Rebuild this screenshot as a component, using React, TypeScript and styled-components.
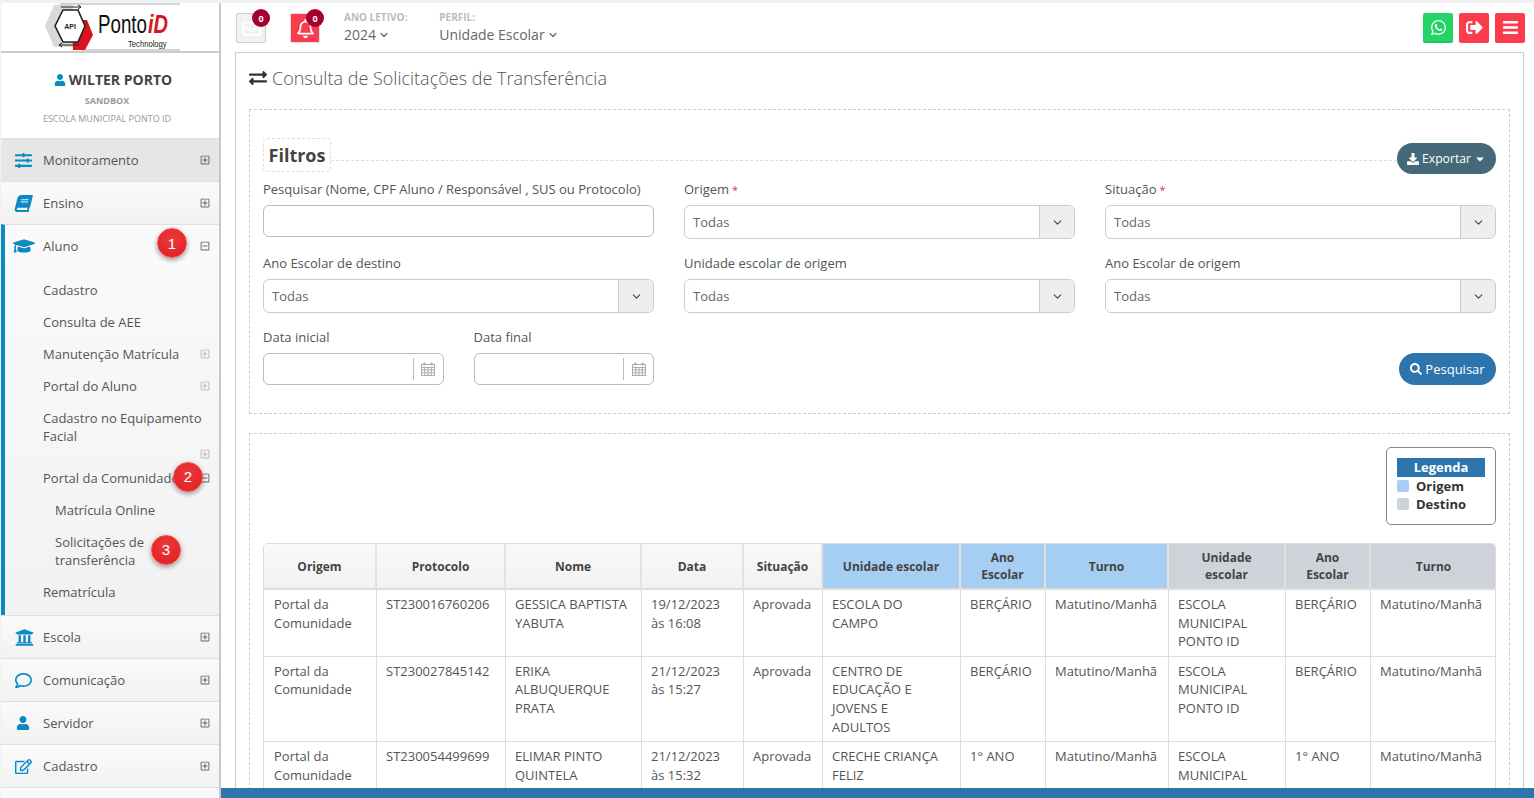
import React from 'react';
import styled, { createGlobalStyle } from 'styled-components';
import { ChevronDown } from 'lucide-react';
import {
  FaBars,
  FaBook,
  FaCaretDown,
  FaDownload,
  FaExchangeAlt,
  FaGraduationCap,
  FaRegBell,
  FaRegComment,
  FaRegEdit,
  FaRegEnvelope,
  FaRegMinusSquare,
  FaRegPlusSquare,
  FaSearch,
  FaSignOutAlt,
  FaSlidersH,
  FaUniversity,
  FaUser,
  FaWhatsapp,
} from 'react-icons/fa';

const GlobalStyle = createGlobalStyle`
  html, body {
    margin: 0;
    height: 100%;
    overflow: hidden;
    background: #f1f1f1;
    font-family: "Open Sans", "Liberation Sans", sans-serif;
    font-size: 13px;
    color: #555;
  }
  * { box-sizing: border-box; }
`;

const Shell = styled.div`
  display: grid;
  grid-template-columns: 220px 1fr;
  height: calc(100vh - 3px);
  margin: 3px 0 0 1px;
  background: #fff;
  overflow: hidden;
  border-top-left-radius: 4px;
`;

const Sidebar = styled.aside`
  display: flex;
  flex-direction: column;
  border-right: 2px solid #c8c8c8;
  overflow: hidden;
`;

const LogoBar = styled.div`
  height: 50px;
  flex: none;
  display: flex;
  padding-left: 44px;
  border-bottom: 2px solid #ccc;
`;

const UserCard = styled.div`
  height: 85px;
  flex: none;
  padding: 17px 6px 0 0;
  text-align: center;
`;

const UserName = styled.div`
  display: flex;
  justify-content: center;
  align-items: center;
  gap: 3px;
  padding-left: 12px;
  font-size: 14px;
  line-height: 20px;
  font-weight: 700;
  color: #444;
  svg { color: #0a8ac4; font-size: 12px; }
`;

const UserLine = styled.div<{ $bold?: boolean }>`
  font-size: 9px;
  font-weight: ${p => (p.$bold ? 700 : 400)};
  line-height: 17px;
  color: #999;
  margin-top: ${p => (p.$bold ? '2px' : '1px')};
`;

const MenuItem = styled.div<{ $hover?: boolean }>`
  position: relative;
  flex: none;
  height: 43px;
  display: flex;
  align-items: center;
  padding: 0 9px 0 42px;
  background: ${p => (p.$hover ? '#e6e6e6' : 'linear-gradient(#fafafa, #f2f2f2)')};
  border-top: 1px solid #dfdfdf;
  font-size: 13px;
  color: #555;
`;

const MenuIcon = styled.span<{ $size?: number; $left?: number; $skew?: boolean }>`
  position: absolute;
  left: ${p => p.$left ?? 4}px;
  width: 36px;
  display: flex;
  justify-content: center;
  color: #0a8ac4;
  font-size: ${p => p.$size ?? 17}px;
  transform: ${p => (p.$skew ? 'skewX(-14deg)' : 'none')};
`;

const MenuLabel = styled.span`
  flex: 1;
`;

const Toggle = styled.span<{ $muted?: boolean }>`
  display: flex;
  font-size: 10px;
  color: ${p => (p.$muted ? '#bbb' : '#666')};
`;

const OpenGroup = styled.div`
  flex: none;
  height: 391px;
  border-left: 4px solid #0a8ac4;
  background: linear-gradient(#fafafa, #f2f2f2);
  border-top: 1px solid #dfdfdf;
`;

const GroupHead = styled(MenuItem)`
  padding-left: 38px;
  background: none;
  border-top: 0;
  height: 42px;
`;

const SubList = styled.div`
  padding-top: 7px;
`;

const SubItem = styled.div<{ $nested?: boolean; $stack?: boolean }>`
  position: relative;
  display: flex;
  flex-wrap: ${p => (p.$stack ? 'wrap' : 'nowrap')};
  align-items: center;
  justify-content: flex-end;
  padding: 7px 9px ${p => (p.$stack ? '0' : '7px')} ${p => (p.$nested ? '50px' : '38px')};
  line-height: 18px;
  color: #555;
  font-size: 13px;
`;

const SubLabel = styled.span<{ $full?: boolean; $narrow?: boolean }>`
  flex: ${p => (p.$full ? '0 0 100%' : '1')};
  max-width: ${p => (p.$narrow ? '100px' : 'none')};
  margin-right: ${p => (p.$narrow ? 'auto' : '0')};
`;

const StackToggle = styled(Toggle)`
  margin-top: 4px;
  height: 13px;
`;

const Marker = styled.span<{ $right: number; $top: number }>`
  position: absolute;
  right: ${p => p.$right}px;
  top: ${p => p.$top}px;
  width: 30px;
  height: 30px;
  border-radius: 50%;
  background: radial-gradient(circle at 50% 35%, #ea3a3a, #e21c22);
  box-shadow: 0 2px 5px rgba(0, 0, 0, 0.4);
  border: 1px solid #f44;
  color: #fff;
  display: flex;
  align-items: center;
  justify-content: center;
  font-family: "Liberation Sans", sans-serif;
  font-size: 15px;
  z-index: 2;
`;

const Main = styled.main`
  display: flex;
  flex-direction: column;
  padding: 0 10px 0 14px;
  min-width: 0;
  overflow: hidden;
`;

const TopBar = styled.header`
  height: 49px;
  flex: none;
  display: flex;
  align-items: flex-start;
  padding: 10px 0 0 1px;
`;

const SquareButton = styled.span<{ $bg: string; $line: string }>`
  position: relative;
  width: 30px;
  height: 30px;
  display: flex;
  align-items: center;
  justify-content: center;
  background: ${p => p.$bg};
  border: 1px solid ${p => p.$line};
  border-radius: 2px;
  color: #fff;
  font-size: 19px;
`;

const CountBadge = styled.span`
  position: absolute;
  top: -5px;
  right: -5px;
  width: 18px;
  height: 18px;
  border-radius: 50%;
  background: #a50030;
  color: #fff;
  font-size: 9px;
  font-weight: 700;
  display: flex;
  align-items: center;
  justify-content: center;
`;

const Gap = styled.span<{ $w: number }>`
  width: ${p => p.$w}px;
  flex: none;
`;

const Picker = styled.div`
  display: flex;
  flex-direction: column;
`;

const PickerLabel = styled.span`
  font-size: 10px;
  font-weight: 700;
  line-height: 11px;
  color: #bbb;
  margin-top: -1px;
`;

const PickerValue = styled.span`
  display: flex;
  align-items: center;
  gap: 2px;
  font-size: 14px;
  line-height: 20px;
  margin-top: 2px;
  color: #666;
  svg { stroke-width: 2.4; }
`;

const RightButtons = styled.div`
  margin: 0 -1px 0 auto;
  display: flex;
  gap: 6px;
`;

const ActionSquare = styled.span<{ $bg: string; $shade: string }>`
  width: 30px;
  height: 30px;
  display: flex;
  align-items: center;
  justify-content: center;
  color: #fff;
  font-size: 17px;
  background: ${p => p.$bg};
  border-bottom: 2px solid ${p => p.$shade};
  border-radius: 2px;
`;

const Panel = styled.section`
  flex: 1;
  border: 1px solid #ccc;
  border-bottom: 0;
  padding: 0 13px;
  overflow: hidden;
`;

const PageTitle = styled.h1`
  margin: 0;
  height: 56px;
  padding-bottom: 6px;
  display: flex;
  align-items: center;
  gap: 5px;
  font-size: 18px;
  font-weight: 300;
  color: #555;
  svg { color: #333; font-size: 18px; }
`;

const DashedBox = styled.div`
  border: 1px dashed #ccc;
  padding: 28px 13px;
`;

const TableBox = styled(DashedBox)`
  margin-top: 19px;
  padding: 13px 13px 0;
`;

const FilterHead = styled.div`
  display: flex;
  align-items: flex-start;
  margin-bottom: 6px;
`;

const FilterTitle = styled.div`
  width: 68px;
  height: 34px;
  border: 1px dashed #ddd;
  border-radius: 4px;
  display: flex;
  align-items: center;
  justify-content: center;
  font-size: 18px;
  font-weight: 700;
  color: #444;
`;

const FilterLine = styled.span`
  flex: 1;
  margin-top: 22px;
  border-top: 1px dashed #ddd;
`;

const PillButton = styled.span<{ $bg: string; $w: number; $h: number }>`
  width: ${p => p.$w}px;
  height: ${p => p.$h}px;
  display: flex;
  align-items: center;
  justify-content: center;
  gap: 3px;
  background: ${p => p.$bg};
  color: #fff;
  border-radius: 16px;
  font-size: 13px;
  svg { font-size: 12px; }
`;

const ExportButton = styled(PillButton)`
  margin-top: 5px;
  font-size: 12.2px;
`;

const FieldGrid = styled.div`
  display: grid;
  grid-template-columns: repeat(3, 1fr);
  column-gap: 30px;
  row-gap: 15px;
`;

const DateGrid = styled.div`
  display: grid;
  grid-template-columns: 1fr 1fr;
  column-gap: 30px;
`;

const SearchCell = styled.div`
  grid-column: 3;
  display: flex;
  justify-content: flex-end;
  align-items: flex-end;
`;

const Field = styled.div`
  display: flex;
  flex-direction: column;
  gap: 7px;
`;

const FieldLabel = styled.label`
  height: 18px;
  font-size: 13px;
  line-height: 18px;
  color: #555;
`;

const Required = styled.span`
  color: #d33;
  font-size: 11px;
  line-height: 1;
  margin-left: 3px;
`;

const TextInput = styled.div`
  height: 32px;
  border: 1px solid #bbb;
  border-radius: 6px;
  background: #fff;
`;

const SelectBox = styled.div`
  height: 34px;
  display: flex;
  align-items: center;
  border: 1px solid #ccc;
  border-radius: 6px;
  padding-left: 8px;
  font-size: 13px;
  color: #666;
  overflow: hidden;
`;

const SelectValue = styled.span`
  flex: 1;
`;

const SelectArrow = styled.span`
  width: 35px;
  height: 100%;
  display: flex;
  align-items: center;
  justify-content: center;
  background: #eee;
  border-left: 1px solid #ccc;
  color: #444;
`;

const DateInput = styled.div`
  height: 32px;
  display: flex;
  align-items: center;
  justify-content: flex-end;
  border: 1px solid #bbb;
  border-radius: 6px;
`;

const DateAddon = styled.span`
  width: 30px;
  height: 22px;
  display: flex;
  align-items: center;
  justify-content: center;
  border-left: 1px solid #bbb;
`;

const LegendRow = styled.div`
  display: flex;
  justify-content: flex-end;
  margin-bottom: 18px;
`;

const Legend = styled.div`
  width: 110px;
  height: 78px;
  border: 1px solid #888;
  border-radius: 5px;
  padding: 10px;
`;

const LegendTitle = styled.div`
  height: 19px;
  line-height: 19px;
  background: #2e74ad;
  color: #fff;
  font-weight: 700;
  font-size: 13px;
  text-align: center;
`;

const LegendItem = styled.div`
  display: flex;
  align-items: center;
  gap: 7px;
  height: 18px;
  font-size: 13px;
  font-weight: 700;
  color: #333;
`;

const Swatch = styled.span<{ $bg: string }>`
  width: 12px;
  height: 12px;
  border-radius: 2px;
  background: ${p => p.$bg};
`;

const TableWrap = styled.div`
  border-radius: 5px 5px 0 0;
  overflow: hidden;
  border: 1px solid #ddd;
  border-bottom: 0;
`;

const DataTable = styled.table`
  width: 100%;
  table-layout: fixed;
  border-collapse: collapse;
`;

const Col = styled.col<{ $w: number }>`
  width: ${p => p.$w}px;
`;

const HeadCell = styled.th<{ $tone?: 'origin' | 'target' }>`
  padding: 5px 10px;
  height: 45px;
  font-size: 12px;
  line-height: 17px;
  font-weight: 700;
  color: #444;
  text-align: center;
  background: ${p =>
    p.$tone === 'origin' ? '#a6cdf2' : p.$tone === 'target' ? '#ced3da' : 'linear-gradient(#f9f9f9, #f2f2f2)'};
  border-left: 2px solid #e2e2e2;
  border-bottom: 2px solid #ddd;
  &:first-child { border-left: 0; }
`;

const BodyCell = styled.td`
  padding: 5px 10px 5px 9.5px;
  font-size: 13px;
  line-height: 18.6px;
  color: #555;
  vertical-align: top;
  border-left: 1px solid #ddd;
  border-bottom: 1px solid #ddd;
  &:first-child { border-left: 0; padding-left: 10px; }
`;

const FooterBar = styled.div`
  position: fixed;
  left: 221px;
  right: 0;
  bottom: 0;
  height: 10px;
  background: #2e74ad;
  z-index: 5;
`;

const Calendar = () => (
  <svg width="14" height="14" viewBox="0 0 14 14" fill="none" stroke="#a8adb3" strokeWidth="1">
    <rect x="0.5" y="2.5" width="13" height="11" />
    <path d="M0.5 5.5h13M0.5 8h13M0.5 10.8h13M3.7 5.5v8M7 5.5v8M10.3 5.5v8" />
    <path d="M3.5 0.5v3M10.5 0.5v3" strokeWidth="2" />
  </svg>
);

const Logo = () => (
  <svg width="135" height="48" viewBox="0 0 135 48">
    <path d="M15 1H135M36 47H135" stroke="#aaa" strokeWidth="1" />
    <path d="M0 23 9 2H28V44H9Z" fill="#d9d9d9" />
    <path d="M27 17H42L48 32 40 47H28Z" fill="#d8141c" />
    <path d="M10 23 18 7H33L40 23 33 39H18Z" fill="#fff" stroke="#222" strokeWidth="1.6" />
    <text x="25" y="26" textAnchor="middle" fontFamily="Liberation Sans, sans-serif" fontSize="7" fontWeight="700" fill="#222">API</text>
    <path d="M14 42H34M14 42l3-2M14 42l3 2M16 4H36M36 4l-3-2M36 4l-3 2" stroke="#222" strokeWidth="1" fill="none" />
    <text transform="translate(53 30) scale(0.75 1)" fontFamily="Liberation Sans, sans-serif" fontSize="25" fill="#111">Ponto</text>
    <text transform="translate(103 30) scale(0.8 1)" fontFamily="Liberation Sans, sans-serif" fontSize="25" fontStyle="italic" fontWeight="700" fill="#d8141c">iD</text>
    <text transform="translate(83 44) scale(0.85 1)" fontFamily="Liberation Sans, sans-serif" fontSize="9" fill="#222">Technology</text>
  </svg>
);

const Plus = ({ muted }: { muted?: boolean }) => (
  <Toggle $muted={muted}><FaRegPlusSquare /></Toggle>
);

const columns = [112, 129, 136, 102, 79, 138, 85, 123, 117, 85, 126];

const headers: { label: string; tone?: 'origin' | 'target' }[] = [
  { label: 'Origem' },
  { label: 'Protocolo' },
  { label: 'Nome' },
  { label: 'Data' },
  { label: 'Situação' },
  { label: 'Unidade escolar', tone: 'origin' },
  { label: 'Ano Escolar', tone: 'origin' },
  { label: 'Turno', tone: 'origin' },
  { label: 'Unidade escolar', tone: 'target' },
  { label: 'Ano Escolar', tone: 'target' },
  { label: 'Turno', tone: 'target' },
];

const rows = [
  ['Portal da Comunidade', 'ST230016760206', 'GESSICA BAPTISTA YABUTA', '19/12/2023 às 16:08', 'Aprovada', 'ESCOLA DO CAMPO', 'BERÇÁRIO', 'Matutino/Manhã', 'ESCOLA MUNICIPAL PONTO ID', 'BERÇÁRIO', 'Matutino/Manhã'],
  ['Portal da Comunidade', 'ST230027845142', 'ERIKA ALBUQUERQUE PRATA', '21/12/2023 às 15:27', 'Aprovada', 'CENTRO DE EDUCAÇÃO E JOVENS E ADULTOS', 'BERÇÁRIO', 'Matutino/Manhã', 'ESCOLA MUNICIPAL PONTO ID', 'BERÇÁRIO', 'Matutino/Manhã'],
  ['Portal da Comunidade', 'ST230054499699', 'ELIMAR PINTO QUINTELA', '21/12/2023 às 15:32', 'Aprovada', 'CRECHE CRIANÇA FELIZ', '1° ANO', 'Matutino/Manhã', 'ESCOLA MUNICIPAL PONTO ID', '1° ANO', 'Matutino/Manhã'],
];

const SelectField = ({ label, required }: { label: string; required?: boolean }) => (
  <Field>
    <FieldLabel>{label}{required && <Required>*</Required>}</FieldLabel>
    <SelectBox>
      <SelectValue>Todas</SelectValue>
      <SelectArrow><ChevronDown size={13} /></SelectArrow>
    </SelectBox>
  </Field>
);

const DateField = ({ label }: { label: string }) => (
  <Field>
    <FieldLabel>{label}</FieldLabel>
    <DateInput><DateAddon><Calendar /></DateAddon></DateInput>
  </Field>
);

export default function App() {
  return (
    <>
      <GlobalStyle />
      <Shell>
        <Sidebar>
          <LogoBar><Logo /></LogoBar>
          <UserCard>
            <UserName><FaUser />WILTER PORTO</UserName>
            <UserLine $bold>SANDBOX</UserLine>
            <UserLine>ESCOLA MUNICIPAL PONTO ID</UserLine>
          </UserCard>
          <MenuItem $hover>
            <MenuIcon><FaSlidersH /></MenuIcon>
            <MenuLabel>Monitoramento</MenuLabel>
            <Plus />
          </MenuItem>
          <MenuItem>
            <MenuIcon $skew><FaBook /></MenuIcon>
            <MenuLabel>Ensino</MenuLabel>
            <Plus />
          </MenuItem>
          <OpenGroup>
            <GroupHead>
              <MenuIcon $size={22} $left={1}><FaGraduationCap /></MenuIcon>
              <MenuLabel>Aluno</MenuLabel>
              <Marker $right={32} $top={3}>1</Marker>
              <Toggle><FaRegMinusSquare /></Toggle>
            </GroupHead>
            <SubList>
              <SubItem><SubLabel>Cadastro</SubLabel></SubItem>
              <SubItem><SubLabel>Consulta de AEE</SubLabel></SubItem>
              <SubItem><SubLabel>Manutenção Matrícula</SubLabel><Plus muted /></SubItem>
              <SubItem><SubLabel>Portal do Aluno</SubLabel><Plus muted /></SubItem>
              <SubItem $stack>
                <SubLabel $full>Cadastro no Equipamento Facial</SubLabel>
                <StackToggle $muted><FaRegPlusSquare /></StackToggle>
              </SubItem>
              <SubItem>
                <SubLabel>Portal da Comunidade</SubLabel>
                <Marker $right={16} $top={0}>2</Marker>
                <Toggle><FaRegMinusSquare /></Toggle>
              </SubItem>
              <SubItem $nested><SubLabel>Matrícula Online</SubLabel></SubItem>
              <SubItem $nested>
                <SubLabel $narrow>Solicitações de transferência</SubLabel>
                <Marker $right={38} $top={9}>3</Marker>
              </SubItem>
              <SubItem><SubLabel>Rematrícula</SubLabel></SubItem>
            </SubList>
          </OpenGroup>
          <MenuItem>
            <MenuIcon $size={19} $left={5}><FaUniversity /></MenuIcon>
            <MenuLabel>Escola</MenuLabel>
            <Plus />
          </MenuItem>
          <MenuItem>
            <MenuIcon><FaRegComment /></MenuIcon>
            <MenuLabel>Comunicação</MenuLabel>
            <Plus />
          </MenuItem>
          <MenuItem>
            <MenuIcon $size={14}><FaUser /></MenuIcon>
            <MenuLabel>Servidor</MenuLabel>
            <Plus />
          </MenuItem>
          <MenuItem>
            <MenuIcon><FaRegEdit /></MenuIcon>
            <MenuLabel>Cadastro</MenuLabel>
            <Plus />
          </MenuItem>
          <MenuItem />
        </Sidebar>

        <Main>
          <TopBar>
            <SquareButton $bg="#f2f2f2" $line="#ccc">
              <FaRegEnvelope />
              <CountBadge>0</CountBadge>
            </SquareButton>
            <Gap $w={24} />
            <SquareButton $bg="#fb3c4d" $line="#e0e0e0">
              <FaRegBell />
              <CountBadge>0</CountBadge>
            </SquareButton>
            <Gap $w={24} />
            <Picker>
              <PickerLabel>ANO LETIVO:</PickerLabel>
              <PickerValue>2024<ChevronDown size={12} /></PickerValue>
            </Picker>
            <Gap $w={32} />
            <Picker>
              <PickerLabel>PERFIL:</PickerLabel>
              <PickerValue>Unidade Escolar<ChevronDown size={12} /></PickerValue>
            </Picker>
            <RightButtons>
              <ActionSquare $bg="#25d366" $shade="#22c55e"><FaWhatsapp /></ActionSquare>
              <ActionSquare $bg="#fb3c4d" $shade="#fb3c4d"><FaSignOutAlt /></ActionSquare>
              <ActionSquare $bg="#fb3c4d" $shade="#fb3c4d"><FaBars /></ActionSquare>
            </RightButtons>
          </TopBar>

          <Panel>
            <PageTitle><FaExchangeAlt />Consulta de Solicitações de Transferência</PageTitle>

            <DashedBox>
              <FilterHead>
                <FilterTitle>Filtros</FilterTitle>
                <FilterLine />
                <ExportButton $bg="#456978" $w={99} $h={31}>
                  <FaDownload />Exportar<FaCaretDown />
                </ExportButton>
              </FilterHead>
              <FieldGrid>
                <Field>
                  <FieldLabel>Pesquisar (Nome, CPF Aluno / Responsável , SUS ou Protocolo)</FieldLabel>
                  <TextInput />
                </Field>
                <SelectField label="Origem" required />
                <SelectField label="Situação" required />
                <SelectField label="Ano Escolar de destino" />
                <SelectField label="Unidade escolar de origem" />
                <SelectField label="Ano Escolar de origem" />
                <DateGrid>
                  <DateField label="Data inicial" />
                  <DateField label="Data final" />
                </DateGrid>
                <SearchCell>
                  <PillButton $bg="#2e74ad" $w={97} $h={32}><FaSearch />Pesquisar</PillButton>
                </SearchCell>
              </FieldGrid>
            </DashedBox>

            <TableBox>
              <LegendRow>
                <Legend>
                  <LegendTitle>Legenda</LegendTitle>
                  <LegendItem><Swatch $bg="#a6cdf2" />Origem</LegendItem>
                  <LegendItem><Swatch $bg="#ced3da" />Destino</LegendItem>
                </Legend>
              </LegendRow>
              <TableWrap>
                <DataTable>
                  <colgroup>
                    {columns.map((w, i) => <Col key={i} $w={w} />)}
                  </colgroup>
                  <thead>
                    <tr>
                      {headers.map((h, i) => <HeadCell key={i} $tone={h.tone}>{h.label}</HeadCell>)}
                    </tr>
                  </thead>
                  <tbody>
                    {rows.map((row, r) => (
                      <tr key={r}>
                        {row.map((cell, c) => <BodyCell key={c}>{cell}</BodyCell>)}
                      </tr>
                    ))}
                  </tbody>
                </DataTable>
              </TableWrap>
            </TableBox>
          </Panel>
        </Main>
      </Shell>
      <FooterBar />
    </>
  );
}
